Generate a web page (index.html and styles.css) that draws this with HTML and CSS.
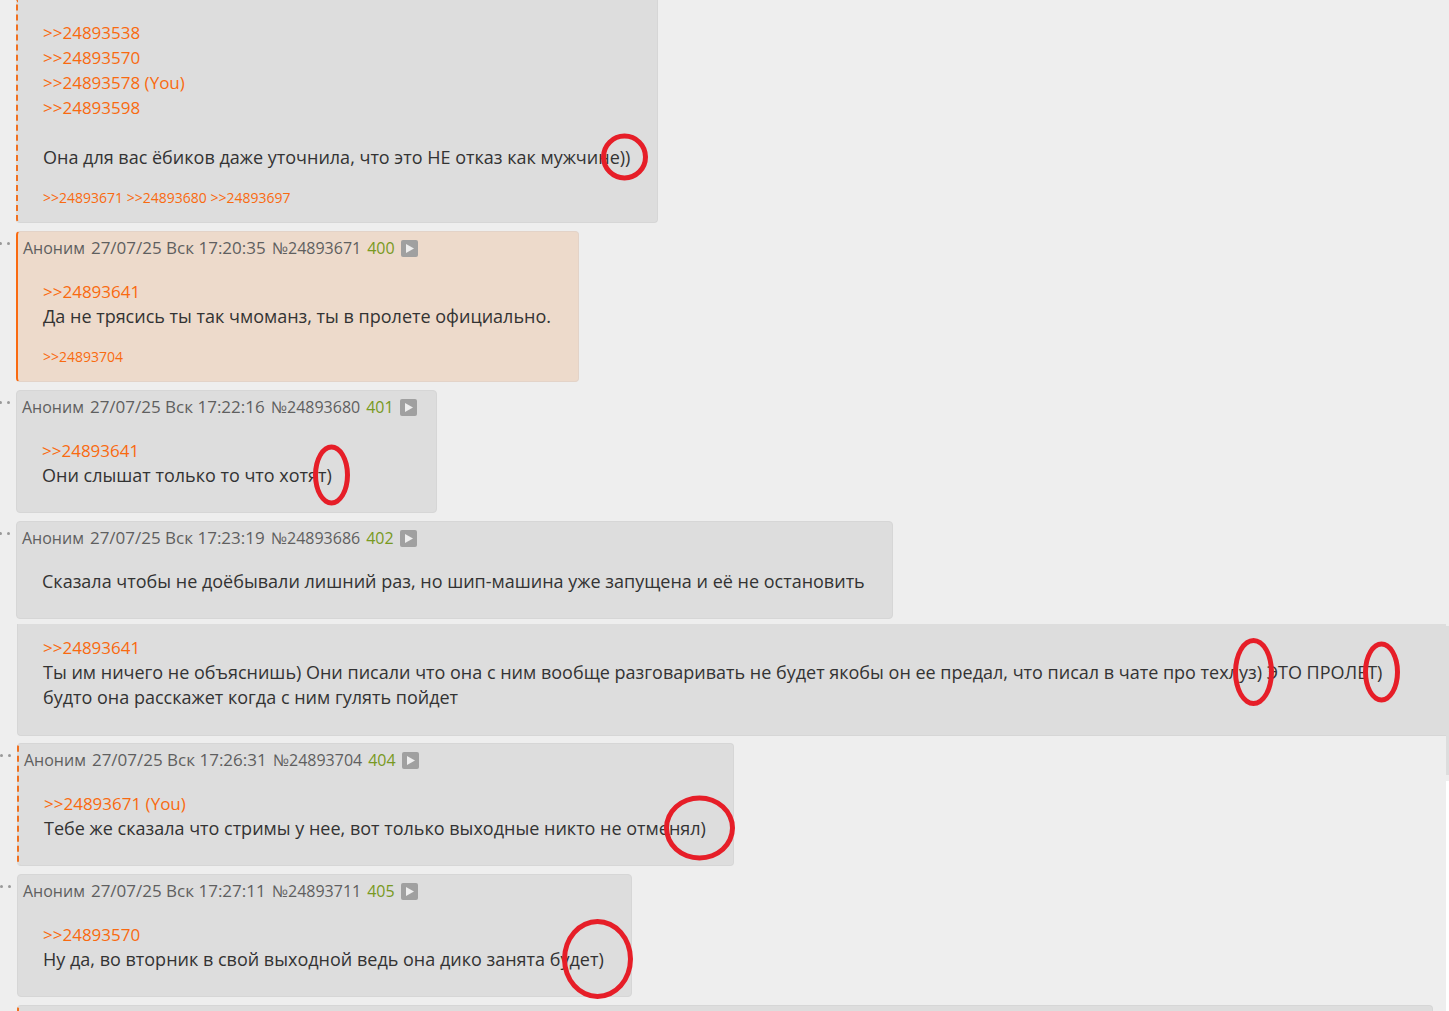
FILE: index.html
```
<!DOCTYPE html>
<html lang="ru">

<head>
    <meta charset="UTF-8">
    <meta name="viewport" content="width=device-width, initial-scale=1.0">
    <title>Тред</title>
    <link rel="stylesheet" href="styles.css">
</head>

<body>
    <main class="thread">
        <section class="chunk">
            <div class="row">
                <div class="gutter"></div>
                <article class="post post-reply post-cut">
                    <div class="message">
                        <a class="ref" href="#24893538">&gt;&gt;24893538</a><br>
                        <a class="ref" href="#24893570">&gt;&gt;24893570</a><br>
                        <a class="ref" href="#24893578">&gt;&gt;24893578 (You)</a><br>
                        <a class="ref" href="#24893598">&gt;&gt;24893598</a><br>
                        <br>
                        Она для вас ёбиков даже уточнила, что это НЕ отказ как мужчин<span class="mark">е))<i class="pen pen-round"></i></span>
                    </div>
                    <div class="replies">
                        <a href="#24893671">&gt;&gt;24893671</a>
                        <a href="#24893680">&gt;&gt;24893680</a>
                        <a href="#24893697">&gt;&gt;24893697</a>
                    </div>
                </article>
            </div>

            <div class="row">
                <div class="gutter"><i class="dot"></i><i class="dot"></i></div>
                <article class="post post-own" id="24893671">
                    <header class="details">
                        <span>Аноним</span>
                        <time class="date">27/07/25 Вск 17:20:35</time>
                        <span>№24893671</span>
                        <span class="number">400</span>
                        <button class="play" type="button" aria-label="Меню поста"><svg viewBox="0 0 17 17"><path d="M5 4v9l8-4.5z"/></svg></button>
                    </header>
                    <div class="message">
                        <a class="ref" href="#24893641">&gt;&gt;24893641</a><br>
                        Да не трясись ты так чмоманз, ты в пролете официально.
                    </div>
                    <div class="replies">
                        <a href="#24893704">&gt;&gt;24893704</a>
                    </div>
                </article>
            </div>

            <div class="row">
                <div class="gutter"><i class="dot"></i><i class="dot"></i></div>
                <article class="post" id="24893680">
                    <header class="details">
                        <span>Аноним</span>
                        <time class="date">27/07/25 Вск 17:22:16</time>
                        <span>№24893680</span>
                        <span class="number">401</span>
                        <button class="play" type="button" aria-label="Меню поста"><svg viewBox="0 0 17 17"><path d="M5 4v9l8-4.5z"/></svg></button>
                    </header>
                    <div class="message">
                        <a class="ref" href="#24893641">&gt;&gt;24893641</a><br>
                        Они слышат только то что хотя<span class="mark">т)<i class="pen pen-narrow"></i></span>
                    </div>
                </article>
            </div>

            <div class="row">
                <div class="gutter"><i class="dot"></i><i class="dot"></i></div>
                <article class="post" id="24893686">
                    <header class="details">
                        <span>Аноним</span>
                        <time class="date">27/07/25 Вск 17:23:19</time>
                        <span>№24893686</span>
                        <span class="number">402</span>
                        <button class="play" type="button" aria-label="Меню поста"><svg viewBox="0 0 17 17"><path d="M5 4v9l8-4.5z"/></svg></button>
                    </header>
                    <div class="message">
                        Сказала чтобы не доёбывали лишний раз, но шип-машина уже запущена и её не остановить
                    </div>
                </article>
            </div>
        </section>

        <section class="chunk chunk-wide">
            <article class="post post-wide">
                <div class="message">
                    <a class="ref" href="#24893641">&gt;&gt;24893641</a><br>
                    Ты им ничего не объяснишь) Они писали что она с ним вообще разговаривать не будет якобы он ее предал, что писал в чате про техл<span class="mark">уз)<i class="pen pen-tall"></i></span> ЭТО ПРОЛЕ<span class="mark">Т)<i class="pen pen-narrow"></i></span><br>
                    будто она расскажет когда с ним гулять пойдет
                </div>
            </article>
            <div class="edge"></div>
        </section>

        <section class="chunk chunk-last">
            <div class="row">
                <div class="gutter"><i class="dot"></i><i class="dot"></i></div>
                <article class="post post-reply" id="24893704">
                    <header class="details">
                        <span>Аноним</span>
                        <time class="date">27/07/25 Вск 17:26:31</time>
                        <span>№24893704</span>
                        <span class="number">404</span>
                        <button class="play" type="button" aria-label="Меню поста"><svg viewBox="0 0 17 17"><path d="M5 4v9l8-4.5z"/></svg></button>
                    </header>
                    <div class="message">
                        <a class="ref" href="#24893671">&gt;&gt;24893671 (You)</a><br>
                        Тебе же сказала что стримы у нее, вот только выходные никто не отме<span class="mark">нял)<i class="pen pen-wide"></i></span>
                    </div>
                </article>
            </div>

            <div class="row">
                <div class="gutter"><i class="dot"></i><i class="dot"></i></div>
                <article class="post" id="24893711">
                    <header class="details">
                        <span>Аноним</span>
                        <time class="date">27/07/25 Вск 17:27:11</time>
                        <span>№24893711</span>
                        <span class="number">405</span>
                        <button class="play" type="button" aria-label="Меню поста"><svg viewBox="0 0 17 17"><path d="M5 4v9l8-4.5z"/></svg></button>
                    </header>
                    <div class="message">
                        <a class="ref" href="#24893570">&gt;&gt;24893570</a><br>
                        Ну да, во вторник в свой выходной ведь она дико занята бу<span class="mark">дет)<i class="pen pen-large"></i></span>
                    </div>
                </article>
            </div>

            <div class="row row-next">
                <div class="gutter"></div>
                <article class="post post-reply post-next"></article>
            </div>
        </section>
    </main>
</body>

</html>
```
FILE: styles.css
```
* {
    box-sizing: border-box;
}

body {
    margin: 0;
    background: #eee;
    color: #333;
    font-family: "Open Sans", "Noto Sans", sans-serif;
    font-size: 18px;
    line-height: 25px;
}

a {
    color: #f96a10;
    text-decoration: none;
}

a:hover {
    color: #c40;
}

.thread {
    height: 100vh;
    overflow: hidden;
}

.chunk {
    display: flex;
    flex-direction: column;
    gap: 8px;
}

.row {
    display: flex;
}

/* menu dots to the left of each post */
.gutter {
    flex: none;
    display: flex;
    justify-content: flex-end;
    gap: 5px;
    width: 16px;
    padding: 11px 6px 0 0;
}

.dot {
    flex: none;
    width: 3px;
    height: 3px;
    border-radius: 50%;
    background: #999;
}

.post {
    padding-bottom: 24px;
    border: 1px solid #d6d6d6;
    border-radius: 4px;
    background: #ddd;
    white-space: nowrap;
}

.post-reply {
    border-left: 2px dashed #f0701f;
}

.post-own {
    border-color: #e3d3c8;
    border-left: 2px solid #f96a10;
    background: #eddacb;
}

.post-cut {
    padding-top: 20px;
    border-top: 0;
    border-radius: 0 0 4px 4px;
}

.post:has(.replies) {
    padding-bottom: 13px;
}

.details {
    display: flex;
    align-items: baseline;
    gap: 6px;
    height: 24px;
    margin: 4px 0 19px;
    padding: 0 19px 0 5px;
    color: #5f5f5f;
    font-size: 16px;
    line-height: 24px;
}

.date {
    font-size: 17px;
}

.number {
    color: #789922;
}

.play {
    align-self: center;
    width: 17px;
    height: 17px;
    padding: 0;
    border: 0;
    border-radius: 2px;
    background: #a0a0a0;
    cursor: pointer;
}

.play svg {
    display: block;
    fill: #eee;
}

.message {
    padding: 0 27px 0 25px;
}

.ref {
    font-size: 17px;
}

.replies {
    margin-top: 17px;
    padding-left: 25px;
    font-size: 14px;
    line-height: 22px;
}

/* red pen circles over the end of a line */
.mark {
    position: relative;
}

.pen {
    position: absolute;
    top: 50%;
    right: -18px;
    border: 5px solid #e61e28;
    border-radius: 50%;
    transform: translateY(-50%);
}

.pen-round {
    width: 47px;
    height: 47px;
}

.pen-narrow {
    width: 37px;
    height: 61px;
}

.pen-tall {
    right: -12px;
    width: 41px;
    height: 68px;
}

.pen-wide {
    right: -29px;
    width: 71px;
    height: 65px;
}

.pen-large {
    right: -29px;
    width: 71px;
    height: 80px;
}

.chunk-wide {
    flex-direction: row;
    gap: 0;
    height: 112px;
    margin-top: 5px;
    padding-left: 17px;
}

.post-wide {
    flex: 1;
    padding-top: 11px;
    border-top: 0;
    border-right: 0;
    border-radius: 0 0 0 4px;
}

/* right side of the post that lies underneath, with the page end below it */
.edge {
    flex: none;
    width: 3px;
    height: 100vh;
    margin-top: 2px;
    background: linear-gradient(#ddd 149px, #eee 149px 155px, #fff 155px);
}

.chunk-last {
    margin-top: 7px;
}

.chunk-last .gutter {
    width: 17px;
}

.row-next {
    padding-right: 16px;
}

.post-next {
    flex: 1;
}
```
